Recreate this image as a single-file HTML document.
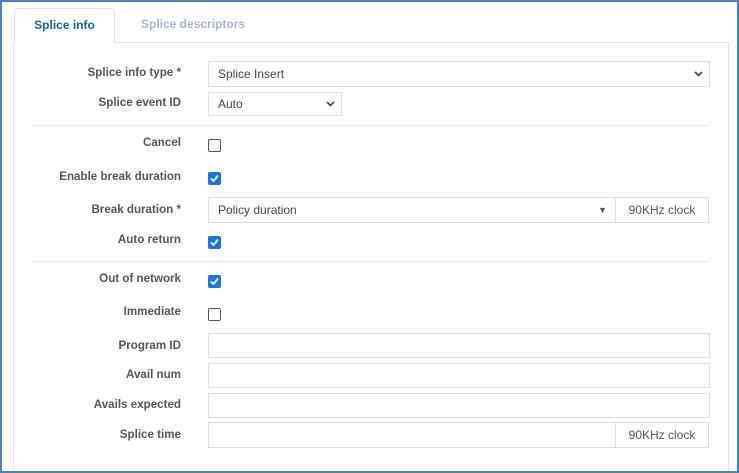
<!DOCTYPE html>
<html><head><style>
*{box-sizing:border-box;margin:0;padding:0}
html,body{width:739px;height:473px;overflow:hidden}
body{background:#fff;font-family:"Liberation Sans",Arial,sans-serif;position:relative}
.frame{position:absolute;left:0;top:0;width:739px;height:473px;border:2px solid #4f7fbd;z-index:5;pointer-events:none}
.panel{position:absolute;left:13px;top:42px;width:716px;height:440px;border:1px solid #e3e3e3}
.tab{position:absolute;left:14px;top:8px;width:101px;height:35px;border:1px solid #e3e3e3;border-bottom:none;border-radius:4px 4px 0 0;background:#fff;color:#1f5f92;font-size:12px;font-weight:bold;text-align:center;line-height:33px;z-index:2}
.tab2{position:absolute;left:141px;top:8px;color:#a7b3c3;font-size:12px;font-weight:bold;line-height:33px}
.lbl{position:absolute;right:558px;font-size:11.6px;font-weight:bold;color:#555;white-space:nowrap}
.box{position:absolute;left:208px;border:1px solid #ddd;background:#fff;font-size:12px;color:#444;padding-left:9px;display:flex;align-items:center}
.add{position:absolute;left:615px;width:94px;border:1px solid #ddd;background:#fff;font-size:12px;color:#555;display:flex;align-items:center;justify-content:center}
.hr{position:absolute;left:33px;width:676px;height:1px;background:#e5e5e5}
.cb{position:absolute;left:208px;width:13px;height:13px;border:1px solid #555;border-radius:2px;background:#fff}
.cb.on{background:#1a73e8;border-color:#1a73e8}
.cb.on svg{position:absolute;left:0px;top:0px}
</style></head><body>
<div class="frame"></div>
<div class="panel"></div>
<div class="tab">Splice info</div>
<div class="tab2">Splice descriptors</div>

<div class="lbl" style="top:66px">Splice info type *</div>
<div class="box" style="top:61px;width:502px;height:26px">Splice Insert<svg style="position:absolute;right:6px;top:9px" width="9" height="6" viewBox="0 0 9 6"><path d="M1 1l3.5 3.5L8 1" stroke="#444" stroke-width="1.6" fill="none"/></svg></div>
<div class="lbl" style="top:96px">Splice event ID</div>
<div class="box" style="top:92px;width:134px;height:24px">Auto<svg style="position:absolute;right:6px;top:8px" width="9" height="6" viewBox="0 0 9 6"><path d="M1 1l3.5 3.5L8 1" stroke="#444" stroke-width="1.6" fill="none"/></svg></div>
<div class="hr" style="top:125px"></div>

<div class="lbl" style="top:136px">Cancel</div>
<div class="cb" style="top:139px"></div>
<div class="lbl" style="top:170px">Enable break duration</div>
<div class="cb on" style="top:172px"><svg width="11" height="11" viewBox="0 0 11 11"><path d="M2 5.5l2.5 2.5L9 2.5" stroke="#fff" stroke-width="1.8" fill="none"/></svg></div>
<div class="lbl" style="top:203px">Break duration *</div>
<div class="box" style="top:197px;width:408px;height:26px">Policy duration<span style="position:absolute;right:8px;font-size:9px;color:#555">▼</span></div>
<div class="add" style="top:197px;height:26px">90KHz clock</div>
<div class="lbl" style="top:233px">Auto return</div>
<div class="cb on" style="top:236px"><svg width="11" height="11" viewBox="0 0 11 11"><path d="M2 5.5l2.5 2.5L9 2.5" stroke="#fff" stroke-width="1.8" fill="none"/></svg></div>
<div class="hr" style="top:261px"></div>

<div class="lbl" style="top:272px">Out of network</div>
<div class="cb on" style="top:275px"><svg width="11" height="11" viewBox="0 0 11 11"><path d="M2 5.5l2.5 2.5L9 2.5" stroke="#fff" stroke-width="1.8" fill="none"/></svg></div>
<div class="lbl" style="top:305px">Immediate</div>
<div class="cb" style="top:308px"></div>
<div class="lbl" style="top:339px">Program ID</div>
<div class="box" style="top:333px;width:502px;height:25px"></div>
<div class="lbl" style="top:368px">Avail num</div>
<div class="box" style="top:363px;width:502px;height:25px"></div>
<div class="lbl" style="top:398px">Avails expected</div>
<div class="box" style="top:393px;width:502px;height:25px"></div>
<div class="lbl" style="top:428px">Splice time</div>
<div class="box" style="top:422px;width:408px;height:26px"></div>
<div class="add" style="top:422px;height:26px">90KHz clock</div>
</body></html>
